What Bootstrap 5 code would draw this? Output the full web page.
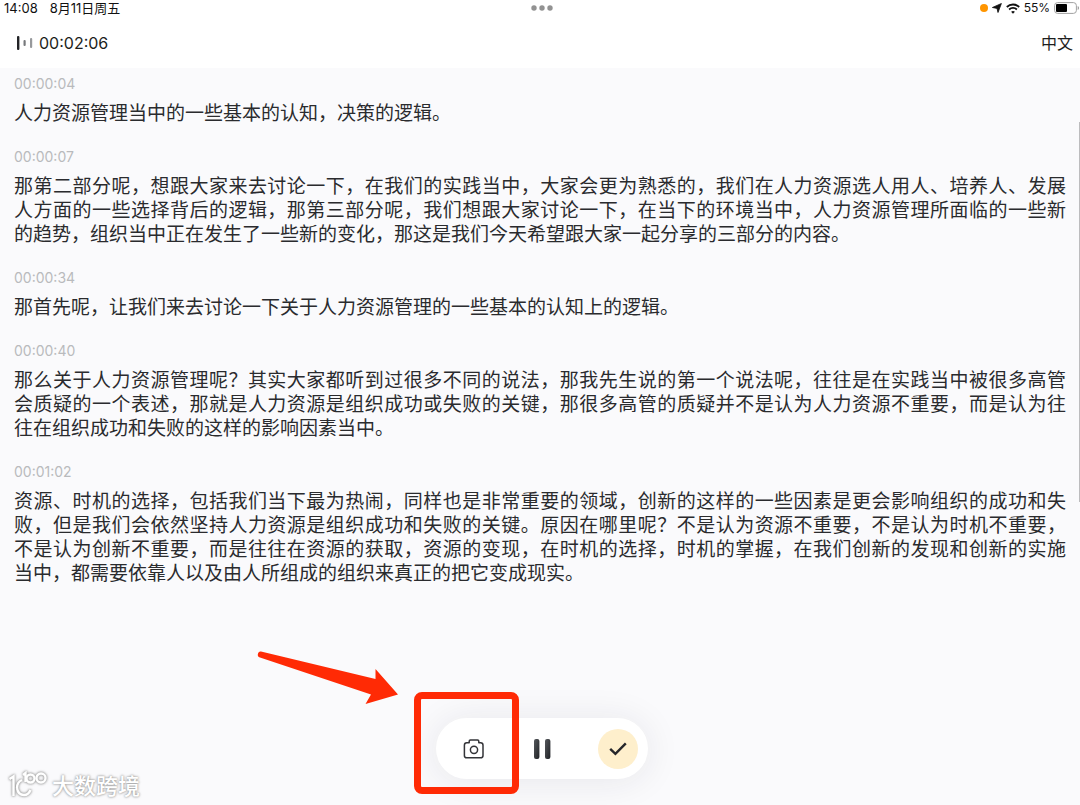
<!DOCTYPE html>
<html lang="zh-CN">
<head>
<meta charset="utf-8">
<meta name="viewport" content="width=device-width, initial-scale=1">
<title>录音转写</title>
<link href="https://cdn.jsdelivr.net/npm/bootstrap@5.3.0/dist/css/bootstrap.min.css" rel="stylesheet">
<style>
  body { font-family: Inter, "Noto Sans CJK SC", sans-serif; color: #2a2b2e; background: #fafafc; }
  .status-bar { height: 16px; font-size: 12px; line-height: 16px; color: #111; padding: 0 1px 0 4px; }
  .clock { font-size: 13px; }
  .side { flex: 1 1 0; }
  .top-bar { height: 52px; padding: 2px 7px 0 16px; font-size: 16px; line-height: 24px; color: #1d1e20; }
  .lang { font-size: 16px; line-height: 24px; color: #1d1e20; }
  .transcript { padding: 4px 14px 0; }
  .stamp { font-size: 14px; line-height: 24px; color: #b9babd; }
  .speech { font-size: 19px; line-height: 24px; margin: 6px 0 19px; }
  .full { display: block; text-align: justify; text-align-last: justify; white-space: nowrap; }
  .scroll-thumb { top: 54px; right: 0; width: 1px; height: 380px; background: #bcbcbe; }
  .dock { padding: 0 0 26px 3px; }
  .pill { width: 212px; height: 61px; padding: 0 10px; background: #fff; box-shadow: 0 2px 36px rgba(30,30,50,.09); }
  .pill .btn { height: 40px; padding: 0; border: 0; }
  .shoot { width: 56px; }
  .pause { width: 80px; }
  .done, .done:hover { width: 40px; background: #feefcc; }
  .marker { left: -22px; top: -26px; width: 105px; height: 102px; border: 7px solid #ff2a05; border-radius: 8px; pointer-events: none; }
  .pointer { left: -180px; top: -70px; pointer-events: none; }
  .watermark { left: 8px; bottom: 4px; font-size: 22px; line-height: 30px; font-weight: 500; color: #fff; text-shadow: 0 0 2px #999, 0 0 3px #aaa; }
  .watermark svg { filter: drop-shadow(0 0 1px #999) drop-shadow(0 0 1px #bbb); }
</style>
</head>
<body>
<div class="d-flex flex-column min-vh-100 position-relative overflow-hidden">
  <header class="bg-white">
    <div class="status-bar d-flex align-items-center">
      <div class="clock side d-flex gap-2"><span>14:08</span><span class="ps-1">8月11日周五</span></div>
      <svg width="22" height="6" viewBox="0 0 22 6" fill="#929292" aria-hidden="true"><circle cx="3" cy="3" r="2.7"/><circle cx="11" cy="3" r="2.7"/><circle cx="19" cy="3" r="2.7"/></svg>
      <div class="side d-flex align-items-center justify-content-end gap-1">
        <svg width="8" height="8" viewBox="0 0 8 8" aria-hidden="true"><circle cx="4" cy="4" r="4" fill="#ff9500"/></svg>
        <svg width="10" height="10" viewBox="0 0 10 10" aria-hidden="true"><path d="M9.400.5 6 9.500 5 5.400.4 4.500Z" fill="#111" stroke="#111" stroke-width=".8" stroke-linejoin="round"/></svg>
        <svg width="14" height="11" viewBox="0 0 14 11" fill="none" stroke="#111" stroke-width="1.8" aria-hidden="true"><path d="M.8 4A9 9 0 0 1 13.2 4M3.1 6.5a5.6 5.6 0 0 1 7.8 0"/><path d="m7 10.800-1.900-2a2.800 2.800 0 0 1 3.800 0Z" fill="#111" stroke="none"/></svg>
        <span>55%</span>
        <svg width="25" height="12" viewBox="0 0 25 12" aria-hidden="true"><rect x=".6" y=".6" width="21.8" height="10.8" rx="3" fill="#fff" stroke="#a0a0a0"/><rect x="2" y="2" width="11" height="8" rx="1" fill="#000"/><path d="M23.7 4v4q1.3-.5 1.3-2t-1.3-2" fill="#999"/></svg>
      </div>
    </div>
    <div class="top-bar d-flex align-items-center justify-content-between">
      <div class="d-flex align-items-center">
        <svg class="me-1" width="19" height="14" viewBox="0 0 19 14" aria-hidden="true"><rect x="1" y="0" width="2.4" height="14" rx="1" fill="#222326"/><rect x="7.500" y="4" width="2.2" height="6" rx="1" fill="#77797c"/><rect x="14" y="2" width="2.2" height="10" rx="1" fill="#97999c"/></svg>
        <span>00:02:06</span>
      </div>
      <button type="button" class="lang btn p-0 border-0">中文</button>
    </div>
  </header>

  <main class="transcript position-relative">
    <section>
      <div class="stamp">00:00:04</div>
      <p class="speech">人力资源管理当中的一些基本的认知，决策的逻辑。</p>
    </section>
    <section>
      <div class="stamp">00:00:07</div>
      <p class="speech"><span class="full">那第二部分呢，想跟大家来去讨论一下，在我们的实践当中，大家会更为熟悉的，我们在人力资源选人用人、培养人、发展</span><span class="full">人方面的一些选择背后的逻辑，那第三部分呢，我们想跟大家讨论一下，在当下的环境当中，人力资源管理所面临的一些新</span>的趋势，组织当中正在发生了一些新的变化，那这是我们今天希望跟大家一起分享的三部分的内容。</p>
    </section>
    <section>
      <div class="stamp">00:00:34</div>
      <p class="speech">那首先呢，让我们来去讨论一下关于人力资源管理的一些基本的认知上的逻辑。</p>
    </section>
    <section>
      <div class="stamp">00:00:40</div>
      <p class="speech"><span class="full">那么关于人力资源管理呢？其实大家都听到过很多不同的说法，那我先生说的第一个说法呢，往往是在实践当中被很多高管</span><span class="full">会质疑的一个表述，那就是人力资源是组织成功或失败的关键，那很多高管的质疑并不是认为人力资源不重要，而是认为往</span>往在组织成功和失败的这样的影响因素当中。</p>
    </section>
    <section>
      <div class="stamp">00:01:02</div>
      <p class="speech"><span class="full">资源、时机的选择，包括我们当下最为热闹，同样也是非常重要的领域，创新的这样的一些因素是更会影响组织的成功和失</span><span class="full">败，但是我们会依然坚持人力资源是组织成功和失败的关键。原因在哪里呢？不是认为资源不重要，不是认为时机不重要，</span><span class="full">不是认为创新不重要，而是往往在资源的获取，资源的变现，在时机的选择，时机的掌握，在我们创新的发现和创新的实施</span>当中，都需要依靠人以及由人所组成的组织来真正的把它变成现实。</p>
    </section>
    <div class="scroll-thumb position-absolute"></div>
  </main>

  <footer class="dock mt-auto d-flex justify-content-center">
    <div class="pill rounded-pill d-flex align-items-center position-relative">
      <button type="button" class="btn shoot d-flex align-items-center justify-content-center" aria-label="拍照">
        <svg width="22" height="20" viewBox="0 0 22 20" fill="none" stroke="#333438" stroke-width="1.5" stroke-linejoin="round"><path d="M5.500 3.800H6.200V2.200Q6.200 1 7.400 1h7.200q1.200 0 1.200 1.200V3.800h1.800q2.400 0 2.400 2.400v10.200q0 2.400-2.400 2.400H3.800q-2.400 0-2.400-2.400V6.200q0-2.400 2.400-2.400Z"/><circle cx="11" cy="10.800" r="3.600"/></svg>
      </button>
      <button type="button" class="btn pause d-flex align-items-center justify-content-center" aria-label="暂停">
        <svg width="18" height="20" viewBox="0 0 18 20"><defs><linearGradient id="barShade" x1="0" y1="0" x2="1" y2="1"><stop offset="0" stop-color="#55585c"/><stop offset="1" stop-color="#202226"/></linearGradient></defs><rect x="1" width="5.4" height="20" rx="2" fill="url(#barShade)"/><rect x="12" width="5.4" height="20" rx="2" fill="url(#barShade)"/></svg>
      </button>
      <button type="button" class="btn done rounded-circle ms-auto d-flex align-items-center justify-content-center" aria-label="完成">
        <svg width="18" height="14" viewBox="0 0 18 14" fill="none" stroke="#25262a" stroke-width="2.4"><path d="m1.200 6.800 5.200 5L16.800 1.400"/></svg>
      </button>
      <div class="marker position-absolute"></div>
      <svg class="pointer position-absolute" width="146" height="58" viewBox="0 0 146 58" aria-hidden="true"><path d="M5 3.500 119.500 31V21L142 46.500 109.500 56l5.500-9.500L4 9.500Q1 8.500 2 5.500 2.800 3 5 3.500Z" fill="#ff2a05"/></svg>
    </div>
  </footer>

  <div class="watermark position-absolute d-flex align-items-center">
    <svg class="me-1" width="40" height="30" viewBox="0 0 40 30" fill="none" stroke="#fff" stroke-width="2.4" aria-hidden="true"><path d="m1.500 8 4-2.500V25M14 9q-5 2-5 8M9 17q1 7 7 7 4.500 0 6.500-5"/><path d="m15 4 2.500-2v9"/><circle cx="22.500" cy="7.500" r="4"/><circle cx="33" cy="7" r="4.500"/></svg>
    <span>大数跨境</span>
  </div>
</div>
<script src="https://cdn.jsdelivr.net/npm/bootstrap@5.3.0/dist/js/bootstrap.bundle.min.js"></script>
</body>
</html>
